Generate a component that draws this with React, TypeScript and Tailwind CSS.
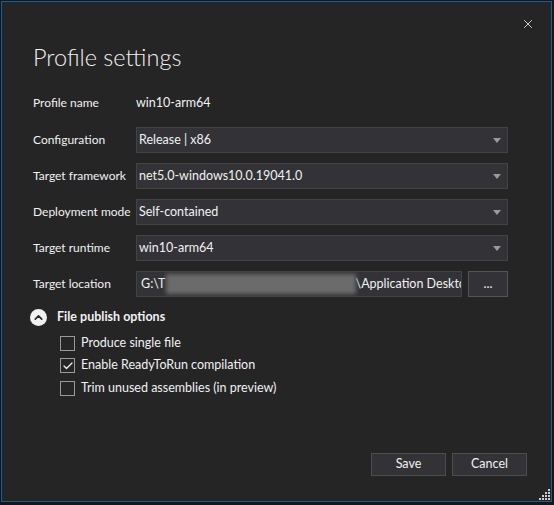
import { Check, ChevronUp, X } from "lucide-react";

const font = { fontFamily: 'Lato, "Noto Sans", sans-serif' };

const Dropdown = ({ value }: { value: string }) => (
    <div className="flex h-[26px] flex-1 items-center justify-between border border-[#434346] bg-[#333337] pl-[2px] pr-[6px]">
        <span className="text-[12.5px] text-[#f1f1f1]">{value}</span>
        <svg width="8" height="5" viewBox="0 0 8 5" className="mt-px">
            <path d="M0 0h8L4 5z" fill="#999999" />
        </svg>
    </div>
);

const Row = ({ label, children }: { label: string; children: React.ReactNode }) => (
    <div className="flex h-[26px] items-center">
        <div className="w-[103px] shrink-0 whitespace-nowrap text-[12px] text-[#f1f1f1]">{label}</div>
        {children}
    </div>
);

const CheckRow = ({ label, checked }: { label: string; checked?: boolean }) => (
    <div className="flex h-[22.5px] items-center gap-[6px]">
        <div className="flex h-[15px] w-[15px] items-center justify-center border border-[#9a9a9a] bg-[#262626]">
            {checked && <Check size={12} strokeWidth={2.5} className="text-[#f1f1f1]" />}
        </div>
        <span className="text-[12.5px] text-[#f1f1f1]">{label}</span>
    </div>
);

export default function App() {
    return (
        <div className="h-[505px] w-[554px] bg-[#161616] pb-[3px] pl-px pr-[2px] pt-px" style={font}>
            <div className="relative flex h-full flex-col border border-[#1c5d8f] bg-[#252526] pl-[31px] pr-[43px]">
                <X size={14} strokeWidth={1.5} className="absolute right-[16px] top-[15px] text-[#e8e8e8]" />
                <h1 className="mt-[38px] text-[23.5px] font-light leading-[34px] text-[#f1f1f1]">Profile settings</h1>
                <div className="mt-[19px] mb-[14px] flex h-[20px] items-center">
                    <div className="w-[103px] shrink-0 text-[12px] text-[#f1f1f1]">Profile name</div>
                    <span className="text-[12.5px] text-[#f1f1f1]">win10-arm64</span>
                </div>
                <div className="flex flex-col gap-[10px]">
                    <Row label="Configuration">
                        <Dropdown value="Release | x86" />
                    </Row>
                    <Row label="Target framework">
                        <Dropdown value="net5.0-windows10.0.19041.0" />
                    </Row>
                    <Row label="Deployment mode">
                        <Dropdown value="Self-contained" />
                    </Row>
                    <Row label="Target runtime">
                        <Dropdown value="win10-arm64" />
                    </Row>
                    <Row label="Target location">
                        <div className="flex h-[26px] min-w-0 flex-1 items-center overflow-hidden whitespace-nowrap border border-[#434346] bg-[#333337] pl-[4px]">
                            <span className="text-[12.5px] text-[#f1f1f1]">G:\T</span>
                            <div className="h-[20px] w-[190px] shrink-0 bg-[#6b6b6b] blur-[2px]" />
                            <span className="text-[12.5px] text-[#f1f1f1]">\Application Desktop Packaging</span>
                        </div>
                        <div className="ml-[6px] flex h-[26px] w-[40px] shrink-0 items-center justify-center border border-[#555558] bg-[#333337] text-[12.5px] text-[#f1f1f1]">
                            ...
                        </div>
                    </Row>
                </div>
                <div className="mt-[11px] flex items-center gap-[10px] -ml-[3px]">
                    <div className="flex h-[17px] w-[17px] items-center justify-center rounded-full bg-[#f1f1f1]">
                        <ChevronUp size={13} strokeWidth={3} className="text-[#252526]" />
                    </div>
                    <span className="text-[12.5px] font-bold text-[#f1f1f1]">File publish options</span>
                </div>
                <div className="ml-[27px] mt-[5px] flex flex-col">
                    <CheckRow label="Produce single file" />
                    <CheckRow label="Enable ReadyToRun compilation" checked />
                    <CheckRow label="Trim unused assemblies (in preview)" />
                </div>
                <div className="mt-auto mb-[25px] -mr-[19px] flex justify-end gap-[6px]">
                    <button className="h-[23px] w-[75px] border border-[#4d4d50] bg-[#333337] text-[12.5px] text-[#f1f1f1]">Save</button>
                    <button className="h-[23px] w-[75px] border border-[#4d4d50] bg-[#333337] text-[12.5px] text-[#f1f1f1]">Cancel</button>
                </div>
                <svg width="11" height="11" viewBox="0 0 11 11" className="absolute bottom-[1px] right-[1px]">
                    {[
                        [9, 0], [6, 3], [9, 3], [3, 6], [6, 6], [9, 6], [0, 9], [3, 9], [6, 9], [9, 9],
                    ].map(([x, y], i) => (
                        <rect key={i} x={x} y={y} width="2" height="2" fill="#d0d0d0" />
                    ))}
                </svg>
            </div>
        </div>
    );
}
